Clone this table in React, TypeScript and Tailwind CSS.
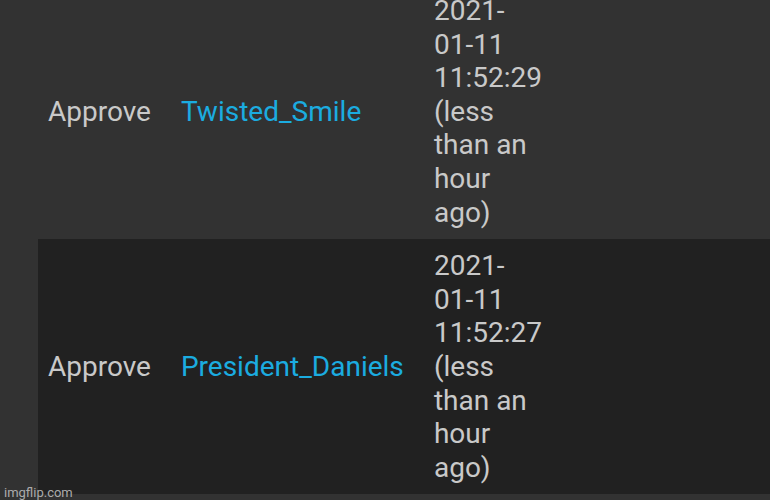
import React from "react";

type Row = { action: string; user: string; time: string; bg: string };

const rows: Row[] = [
  { action: "Approve", user: "Twisted_Smile", time: "11:52:29", bg: "bg-transparent" },
  { action: "Approve", user: "President_Daniels", time: "11:52:27", bg: "bg-[#212121]" },
];

export default function App() {
  return (
    <div
      className="relative w-[770px] h-[500px] overflow-hidden bg-[#323232]"
      style={{ fontFamily: "Roboto, 'Noto Sans', sans-serif" }}
    >
      <div className="-mt-[16px] pl-[38px] flex flex-col text-[28px] leading-[1.2] text-[#c9c9c9]">
        {rows.map((r, i) => (
          <div key={i} className={`flex items-center ${r.bg}`}>
            <div className="pl-[10px] pr-[20px]">{r.action}</div>
            <div className="w-[253px] shrink-0 pl-[10px] pr-[20px] text-[#1bace0]">{r.user}</div>
            <div className="pl-[10px] py-[10px] w-[118px] shrink-0 box-border">
              2021-<wbr />01-11 {r.time} (less than an hour ago)
            </div>
          </div>
        ))}
      </div>
      <div
        className="absolute left-[4px] top-[483px] text-[13px] text-[#ababab]"
        style={{ fontFamily: "Roboto, 'Liberation Sans', sans-serif" }}
      >
        imgflip.com
      </div>
    </div>
  );
}
